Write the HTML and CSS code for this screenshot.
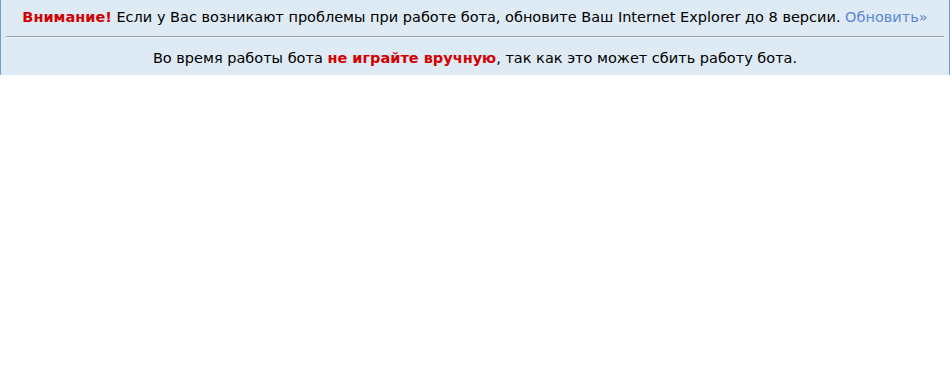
FILE: index.html
```html
<!DOCTYPE html>
<html>
<head>
<meta charset="utf-8">
<link rel="stylesheet" href="styles.css">
</head>
<body>
<div class="notice">
  <div class="line first"><b class="warn">Внимание!</b> Если у Вас возникают проблемы при работе бота, обновите Ваш Internet Explorer до 8 версии. <a class="link" href="#">Обновить»</a></div>
  <hr class="sep">
  <div class="line second">Во время работы бота <b class="warn">не играйте вручную</b>, так как это может сбить работу бота.</div>
</div>
</body>
</html>
```
FILE: styles.css
```css
html, body { margin: 0; padding: 0; background: #fff; }
body { font-family: "DejaVu Sans", Verdana, sans-serif; font-size: 14.5px; color: #000; }
.notice {
  width: 948px;
  background: #deeaf4;
  border-left: 1px solid #6b9fd8;
  border-right: 1px solid #6b9fd8;
  height: 75px;
}
.line { text-align: center; line-height: 18px; }
.first { padding-top: 8px; height: 28px; }
.second { padding-top: 11px; }
.warn { color: #d20000; }
.link { color: #5b87d4; text-decoration: none; }
.sep { margin: 0 5px 0 5px; border: 0; border-top: 1px solid #a0a0a0; border-bottom: 1px solid #f0f5fa; height: 0; }
```
